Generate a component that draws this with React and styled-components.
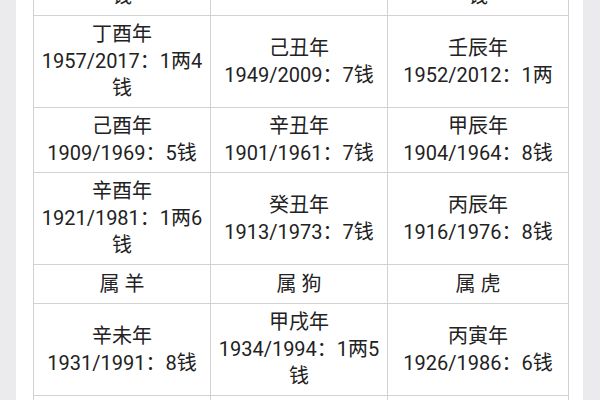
import React from 'react';
import styled, { createGlobalStyle } from 'styled-components';

const GlobalStyle = createGlobalStyle`
  html, body {
    margin: 0;
    padding: 0;
    background: #ebebed;
  }
`;

const Page = styled.div`
  width: 600px;
  height: 400px;
  overflow: hidden;
  display: flex;
  background: #ebebed;
  font-family: Roboto, 'Noto Sans CJK SC', sans-serif;
`;

const Sheet = styled.div`
  margin: 0 17px 0 16px;
  flex: 1;
  background: #ffffff;
  padding-left: 17px;
`;

const Grid = styled.div`
  display: grid;
  grid-template-columns: 177px 177px 181px;
  margin-top: -77px;
  border-top: 1px solid #d2d2d2;
  border-left: 1px solid #d2d2d2;
`;

const Cell = styled.div`
  display: flex;
  flex-direction: column;
  justify-content: center;
  align-items: center;
  padding: ${props => (props.header ? '5.5px 4px' : '5px 4px')};
  border-right: 1px solid #d2d2d2;
  border-bottom: 1px solid #d2d2d2;
  color: #222222;
  font-size: 20px;
  line-height: 27px;
  text-align: center;
`;

const Line = styled.div`
  white-space: nowrap;
`;

const rows = [
  [
    ['乙酉年', '1945/2005：1两5', '钱'],
    ['丁丑年', '1937/1997：8钱'],
    ['庚辰年', '1940/2000：1两2', '钱'],
  ],
  [
    ['丁酉年', '1957/2017：1两4', '钱'],
    ['己丑年', '1949/2009：7钱'],
    ['壬辰年', '1952/2012：1两'],
  ],
  [
    ['己酉年', '1909/1969：5钱'],
    ['辛丑年', '1901/1961：7钱'],
    ['甲辰年', '1904/1964：8钱'],
  ],
  [
    ['辛酉年', '1921/1981：1两6', '钱'],
    ['癸丑年', '1913/1973：7钱'],
    ['丙辰年', '1916/1976：8钱'],
  ],
  { header: ['属 羊', '属 狗', '属 虎'] },
  [
    ['辛未年', '1931/1991：8钱'],
    ['甲戌年', '1934/1994：1两5', '钱'],
    ['丙寅年', '1926/1986：6钱'],
  ],
  [
    ['癸未年', '1943/2003：7钱'],
    ['丙戌年', '1946/2006：6钱'],
    ['戊寅年', '1938/1998：8钱'],
  ],
];

const App = () => (
  <Page>
    <GlobalStyle />
    <Sheet>
      <Grid>
        {rows.map((row, r) =>
          row.header
            ? row.header.map((title, c) => (
                <Cell key={`${r}-${c}`} header>
                  <Line>{title}</Line>
                </Cell>
              ))
            : row.map((lines, c) => (
                <Cell key={`${r}-${c}`}>
                  {lines.map(text => (
                    <Line key={text}>{text}</Line>
                  ))}
                </Cell>
              )),
        )}
      </Grid>
    </Sheet>
  </Page>
);

export default App;
